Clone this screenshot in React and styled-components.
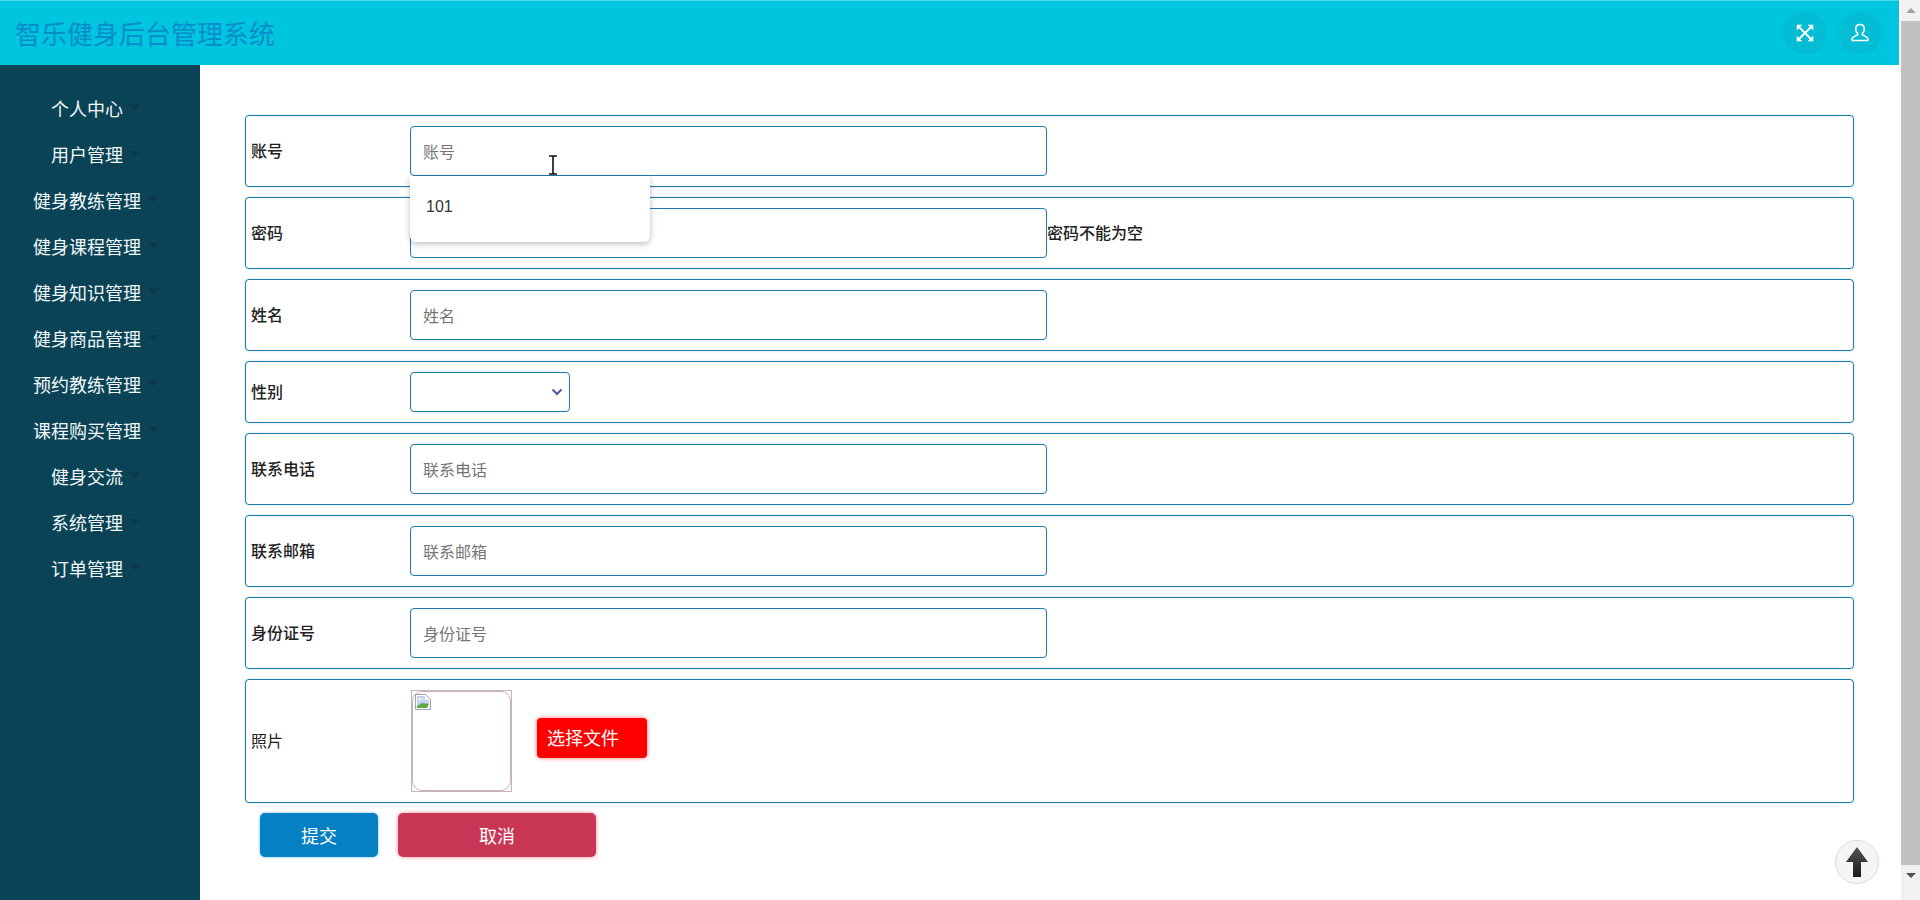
import styled, { createGlobalStyle } from "styled-components";

const menuItems = [
  "个人中心",
  "用户管理",
  "健身教练管理",
  "健身课程管理",
  "健身知识管理",
  "健身商品管理",
  "预约教练管理",
  "课程购买管理",
  "健身交流",
  "系统管理",
  "订单管理",
];

export default function App() {
  return (
    <>
      <GlobalStyle />
      <Page>
        <Main>
          <Header>
            <Title>智乐健身后台管理系统</Title>
            <HeaderTools>
              <RoundButton type="button" aria-label="全屏">
                <svg width="20" height="20" viewBox="0 0 20 20" fill="none" stroke="#fff" strokeWidth="1.8">
                  <path d="M4 4l12 12M16 4L4 16" />
                  <path d="M2 7V2h5M13 2h5v5M18 13v5h-5M7 18H2v-5" fill="#fff" strokeWidth="0.6" />
                </svg>
              </RoundButton>
              <RoundButton type="button" aria-label="用户">
                <svg width="22" height="22" viewBox="0 0 22 22" fill="none" stroke="#fff" strokeWidth="1.6">
                  <path d="M11 2.5c-2.7 0-4.3 2-4.3 4.4 0 2 .9 3.5 2 4.5v1.3c-1.8 1-5.1 2-5.9 4.1-.3.8.1 1.700 1 1.700h14.400c.9 0 1.300-.9 1-1.700-.8-2.100-4.100-3.100-5.900-4.100v-1.300c1.100-1 2-2.500 2-4.500 0-2.400-1.600-4.400-4.300-4.400z" />
                </svg>
              </RoundButton>
            </HeaderTools>
          </Header>
          <Body>
            <Sidebar>
              {menuItems.map((item) => (
                <MenuItem key={item}>
                  <MenuText>{item}</MenuText>
                  <Caret />
                </MenuItem>
              ))}
            </Sidebar>
            <Content>
              <Form>
                <Row>
                  <Label>账号</Label>
                  <AccountField>
                    <TextInput placeholder="账号" />
                    <Suggestions>
                      <Suggestion>101</Suggestion>
                    </Suggestions>
                    <TextCursor width="10" height="20" viewBox="0 0 10 20" fill="none" stroke="#111" strokeWidth="1.600">
                      <path d="M1 1h8M5 1v18M1 19h8" />
                    </TextCursor>
                  </AccountField>
                </Row>
                <Row>
                  <Label>密码</Label>
                  <TextInput type="password" />
                  <Hint>密码不能为空</Hint>
                </Row>
                <Row>
                  <Label>姓名</Label>
                  <TextInput placeholder="姓名" />
                </Row>
                <Row>
                  <Label>性别</Label>
                  <GenderSelect defaultValue="">
                    <option value=""></option>
                    <option value="男">男</option>
                    <option value="女">女</option>
                  </GenderSelect>
                </Row>
                <Row>
                  <Label>联系电话</Label>
                  <TextInput placeholder="联系电话" />
                </Row>
                <Row>
                  <Label>联系邮箱</Label>
                  <TextInput placeholder="联系邮箱" />
                </Row>
                <Row>
                  <Label>身份证号</Label>
                  <TextInput placeholder="身份证号" />
                </Row>
                <Row>
                  <Label $plain>照片</Label>
                  <PhotoFrame>
                    <Photo>
                      <svg width="16" height="16" viewBox="0 0 16 16">
                        <path d="M.5.5h10l5 5v10H.5z" fill="#fff" stroke="#a3a3a3" />
                        <path d="M2 2h8v4h4v4L2 12z" fill="#c5d5f2" />
                        <path d="M2 14v-2l5-3 7 1-2 4z" fill="#5fa845" />
                        <path d="M3 6l2-2 3 2z" fill="#fff" />
                      </svg>
                    </Photo>
                  </PhotoFrame>
                  <FileButton type="button">选择文件</FileButton>
                </Row>
                <Actions>
                  <SubmitButton type="button">提交</SubmitButton>
                  <CancelButton type="button">取消</CancelButton>
                </Actions>
              </Form>
              <BackToTop type="button" aria-label="回到顶部">
                <svg width="22" height="30" viewBox="0 0 22 30">
                  <defs>
                    <linearGradient id="arrowFill" x1="0" y1="0" x2="0" y2="1">
                      <stop offset="0" stopColor="#555" />
                      <stop offset="1" stopColor="#1c1a1a" />
                    </linearGradient>
                  </defs>
                  <path d="M11 0L22 15h-7v15H7V15H0z" fill="url(#arrowFill)" />
                </svg>
              </BackToTop>
            </Content>
          </Body>
        </Main>
        <FakeScrollbar>
          <ScrollArrow $up />
          <ScrollThumb />
          <ScrollArrow />
        </FakeScrollbar>
      </Page>
    </>
  );
}

const GlobalStyle = createGlobalStyle`
  html, body {
    margin: 0;
    height: 900px;
    overflow: hidden;
    background: #fff;
    font-family: "Liberation Sans", "Noto Sans CJK SC", sans-serif;
  }
  * {
    box-sizing: border-box;
  }
`;

const Page = styled.div`
  display: flex;
  height: 900px;
`;

const Main = styled.div`
  width: 1899px;
  display: flex;
  flex-direction: column;
`;

const Header = styled.header`
  height: 65px;
  flex: none;
  display: flex;
  align-items: center;
  justify-content: space-between;
  padding: 0 19px 0 15px;
  background: #00c5de;
  border-top: 1px solid #4cd9ea;
`;

const Title = styled.h1`
  margin: 0 0 2px;
  font-size: 26px;
  font-weight: 400;
  color: #0a8ccb;
`;

const HeaderTools = styled.div`
  display: flex;
  gap: 15px;
`;

const RoundButton = styled.button`
  width: 40px;
  height: 40px;
  padding: 0;
  border: 0;
  border-radius: 50%;
  display: flex;
  align-items: center;
  justify-content: center;
  background: #04bcd4;
  box-shadow: 0 0 3px rgba(0, 130, 160, 0.35);
`;

const Body = styled.div`
  flex: 1;
  display: flex;
  min-height: 0;
`;

const Sidebar = styled.nav`
  width: 200px;
  flex: none;
  padding-top: 20px;
  background: #0b4356;
`;

const MenuItem = styled.div`
  height: 46px;
  width: 191px;
  padding-bottom: 1px;
  display: flex;
  align-items: center;
  justify-content: center;
  gap: 7px;
`;

const MenuText = styled.span`
  font-size: 18px;
  color: #f2f8fa;
`;

const Caret = styled.i`
  width: 0;
  height: 0;
  border-left: 5px solid transparent;
  border-right: 5px solid transparent;
  border-top: 5px solid #0a3747;
`;

const Content = styled.main`
  flex: 1;
  position: relative;
  padding: 50px 45px 0;
`;

const Form = styled.form`
  display: flex;
  flex-direction: column;
  gap: 10px;
`;

const Row = styled.div`
  display: flex;
  align-items: center;
  padding: 10px 5px 10px 5px;
  border: 1px solid #1f7aa8;
  border-radius: 4px;
  box-shadow: 0 0 2px rgba(110, 200, 240, 0.7);
`;

const Label = styled.label`
  width: 159px;
  flex: none;
  margin-top: -2px;
  font-size: 16px;
  font-weight: ${({ $plain }) => ($plain ? 400 : 500)};
  color: #222;
`;

const TextInput = styled.input`
  width: 637px;
  height: 50px;
  padding: 3px 12px 0;
  font: inherit;
  font-size: 16px;
  color: #333;
  background: #fff;
  border: 1px solid #1f7aa8;
  border-radius: 4px;
  outline: none;

  &::placeholder {
    color: #757575;
  }
`;

const AccountField = styled.div`
  position: relative;
  display: flex;
`;

const Suggestions = styled.ul`
  position: absolute;
  top: 50px;
  left: 0;
  z-index: 5;
  width: 240px;
  height: 66px;
  margin: 0;
  padding: 0;
  list-style: none;
  background: #fff;
  border-radius: 0 0 6px 6px;
  box-shadow: 0 2px 6px rgba(0, 0, 0, 0.25);
`;

const Suggestion = styled.li`
  padding: 22px 16px 0;
  font-size: 16px;
  color: #333;
`;

const TextCursor = styled.svg`
  position: absolute;
  top: 29px;
  left: 138px;
  z-index: 6;
`;

const Hint = styled.span`
  margin-top: -2px;
  font-size: 16px;
  font-weight: 500;
  color: #222;
`;

const GenderSelect = styled.select`
  width: 160px;
  height: 40px;
  padding: 0 12px;
  font: inherit;
  font-size: 16px;
  appearance: none;
  border: 1.5px solid #1f7aa8;
  border-radius: 4px;
  outline: none;
  background: #fff url("data:image/svg+xml,%3Csvg xmlns='http://www.w3.org/2000/svg' width='12' height='8' viewBox='0 0 12 8' fill='none' stroke='%234a5aa8' stroke-width='2'%3E%3Cpath d='M1.500 1.500L6 6l4.500-4.500'/%3E%3C/svg%3E") no-repeat right 6px center;
`;

const PhotoFrame = styled.div`
  width: 101px;
  height: 102px;
  margin-left: 1px;
  flex: none;
  border: 1px solid #c8b4b4;
`;

const Photo = styled.div`
  width: 100%;
  height: 100%;
  padding: 2px 0 0 2px;
  border: 1px solid #c8b4b4;
  border-radius: 10px;
  background: #fff;
`;

const FileButton = styled.button`
  width: 110px;
  height: 40px;
  margin: -6px 0 0 25px;
  padding: 0 0 2px 10px;
  text-align: left;
  font: inherit;
  font-size: 18px;
  color: #fff;
  background: #f00;
  border: 0;
  border-radius: 4px;
  box-shadow: 0 0 4px rgba(255, 0, 0, 0.55);
`;

const Actions = styled.div`
  display: flex;
  gap: 20px;
  padding-left: 15px;
`;

const SubmitButton = styled.button`
  width: 118px;
  height: 44px;
  font: inherit;
  font-size: 18px;
  color: #fff;
  background: #0580c2;
  border: 0;
  border-radius: 5px;
  box-shadow: 0 0 3px rgba(70, 170, 230, 0.8);
`;

const CancelButton = styled(SubmitButton)`
  width: 198px;
  background: #c83555;
  box-shadow: 0 0 4px rgba(235, 90, 120, 0.7);
`;

const BackToTop = styled.button`
  position: absolute;
  right: 20px;
  bottom: 16px;
  width: 44px;
  height: 44px;
  padding: 0;
  display: flex;
  align-items: center;
  justify-content: center;
  border: 1px solid #cfdfe8;
  border-radius: 50%;
  background: #f5f5f5;
`;

const FakeScrollbar = styled.div`
  flex: 1;
  margin-left: 2px;
  display: flex;
  flex-direction: column;
  background: #f1f1f1;
`;

const ScrollArrow = styled.div`
  height: 21px;
  flex: none;
  display: flex;
  align-items: center;
  justify-content: center;

  &::before {
    content: "";
    border-left: 5px solid transparent;
    border-right: 5px solid transparent;
    ${({ $up }) =>
      $up ? "border-bottom: 5px solid #a3a3a3;" : "border-top: 5px solid #505050;"}
  }
`;

const ScrollThumb = styled.div`
  height: 844px;
  flex: none;
  background: #c1c1c1;
`;
